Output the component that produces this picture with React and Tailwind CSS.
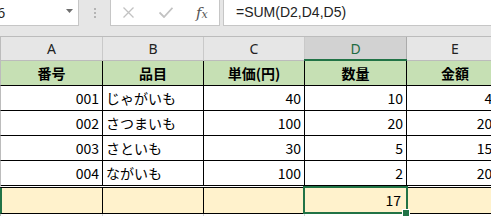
import React from "react";

const cols = [
  { key: "A", w: "w-[102px]" },
  { key: "B", w: "w-[101px]" },
  { key: "C", w: "w-[101px]" },
  { key: "D", w: "w-[102px]" },
  { key: "E", w: "w-[97px]" },
];

const heads = ["番号", "品目", "単価(円)", "数量", "金額"];

const rows = [
  ["001", "じゃがいも", "40", "10", "40"],
  ["002", "さつまいも", "100", "20", "200"],
  ["003", "さといも", "30", "5", "150"],
  ["004", "ながいも", "100", "2", "200"],
];

const font = { fontFamily: '"Noto Sans CJK JP", "Noto Sans", sans-serif' };

export default function App() {
  return (
    <div
      className="relative w-[491px] h-[216px] overflow-hidden bg-white text-black"
      style={font}
    >
      {/* formula bar */}
      <div className="flex h-[36px] bg-[#e6e6e6] items-start">
        <div className="relative flex h-[26px] w-[79px] shrink-0 items-center overflow-hidden border-b border-r border-[#c6c6c6] bg-white">
          <span
            className="ml-[-13px] text-[14px] text-[#222]"
            style={{ fontFamily: '"Noto Sans", sans-serif' }}
          >
            D6
          </span>
          <svg
            className="absolute left-[66px] top-[9px]"
            width="7"
            height="4"
            viewBox="0 0 7 4"
          >
            <path d="M0 0 H7 L3.5 4 Z" fill="#6f6f6f" />
          </svg>
        </div>
        <div className="flex h-[26px] w-[31px] shrink-0 flex-col items-center justify-center gap-[2px]">
          <span className="block h-[2px] w-[2px] bg-[#b4b4b4]" />
          <span className="block h-[2px] w-[2px] bg-[#b4b4b4]" />
          <span className="block h-[2px] w-[2px] bg-[#b4b4b4]" />
        </div>
        <div className="relative flex h-[26px] w-[110px] shrink-0 items-center border-x border-b border-[#c6c6c6] bg-white">
          <svg
            className="absolute left-[12px] top-[7px]"
            width="11"
            height="11"
            viewBox="0 0 11 11"
          >
            <path
              d="M0.5 0.5 L10.5 10.5 M10.5 0.5 L0.5 10.5"
              stroke="#c2c2c2"
              strokeWidth="1.3"
              fill="none"
            />
          </svg>
          <svg
            className="absolute left-[48px] top-[7px]"
            width="14"
            height="11"
            viewBox="0 0 14 11"
          >
            <path
              d="M0.5 5.5 L5 10 L13.5 0.8"
              stroke="#c2c2c2"
              strokeWidth="1.8"
              fill="none"
            />
          </svg>
          <span
            className="absolute left-[85px] top-[2px] text-[15px] italic text-[#555]"
            style={{ fontFamily: '"DejaVu Serif", "Liberation Serif", serif' }}
          >
            f<span className="text-[11px]">x</span>
          </span>
        </div>
        <div className="w-[3px] shrink-0" />
        <div className="flex h-[26px] flex-1 items-center border-l border-b border-[#c6c6c6] bg-white pl-[12px]">
          <span
            className="text-[14px] text-[#222]"
            style={{ fontFamily: '"Liberation Sans", sans-serif' }}
          >
            =SUM(D2,D4,D5)
          </span>
        </div>
      </div>

      {/* column headers */}
      <div className="flex h-[25px] border-t border-b border-[#bcbcbc] border-l bg-[#e6e6e6]">
        {cols.map((c) => (
          <div
            key={c.key}
            className={`${c.w} shrink-0 flex items-center justify-center border-r ${
              c.key === "D"
                ? "bg-[#d2d2d2] border-[#ababab] text-[#1e6b41]"
                : "border-[#c9c9c9] text-[#222]"
            } text-[14px]`}
            style={{ fontFamily: '"Noto Sans", sans-serif' }}
          >
            {c.key}
          </div>
        ))}
      </div>
      {/* green line under D header */}
      <div className="absolute left-[304px] top-[59px] h-[2px] w-[103px] bg-[#217346]" />

      {/* header row */}
      <div className="flex h-[25px] border-b border-l border-b-black border-l-[#bcbcbc] bg-[#c6e0b4]">
        {cols.map((c, i) => (
          <div
            key={c.key}
            className={`${c.w} shrink-0 flex items-center justify-center border-r border-black text-[14px] font-bold`}
          >
            {heads[i]}
          </div>
        ))}
      </div>

      {/* data rows */}
      {rows.map((r, ri) => (
        <div
          key={ri}
          className={`flex border-l border-l-[#bcbcbc] ${
            ri === rows.length - 1
              ? "h-[27px] border-b-[3px] border-double border-b-black"
              : "h-[25px] border-b border-b-black"
          }`}
        >
          {cols.map((c, ci) => (
            <div
              key={c.key}
              className={`${c.w} shrink-0 flex items-center border-r border-black text-[14px] ${
                ci === 1 ? "justify-start pl-[3px]" : "justify-end pr-[3px]"
              }`}
            >
              {r[ci]}
            </div>
          ))}
        </div>
      ))}

      {/* total row */}
      <div className="flex h-[26px] border-b border-b-black border-l-2 border-l-[#217346] bg-[#fff2cc]">
        {cols.map((c, ci) => (
          <div
            key={c.key}
            className={`${ci === 0 ? "w-[101px]" : c.w} shrink-0 flex items-center justify-end border-r border-black pr-[5px] text-[14px]`}
          >
            {c.key === "D" ? "17" : ""}
          </div>
        ))}
      </div>

      {/* below grid */}
      <div className="flex h-[4px] border-l border-[#bcbcbc]">
        {cols.map((c) => (
          <div key={c.key} className={`${c.w} shrink-0 border-r border-[#d4d4d4]`} />
        ))}
      </div>

      {/* selection */}
      <div className="absolute left-[303px] top-[186px] h-[28px] w-[105px] border-2 border-[#217346]" />
      <div className="absolute left-[402px] top-[209px] h-[8px] w-[8px] border border-white bg-[#217346]" />
    </div>
  );
}
